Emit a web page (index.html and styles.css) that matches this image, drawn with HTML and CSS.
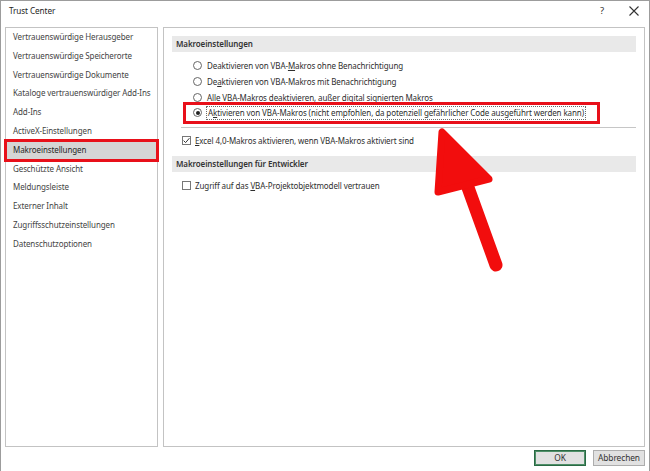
FILE: index.html
```html
<!DOCTYPE html>
<html lang="de">
<head>
<meta charset="utf-8">
<title>Trust Center</title>
<link rel="stylesheet" href="styles.css">
</head>
<body>
<div class="window">
  <div class="titlebar">
    <span class="title">Trust Center</span>
    <span class="tb-help">?</span>
    <span class="tb-close"><svg width="10" height="10" viewBox="0 0 10 10"><path d="M0.5 0.5L9.5 9.5M9.5 0.5L0.5 9.5" stroke="#333" stroke-width="1.1" fill="none"/></svg></span>
  </div>
  <div class="main">
    <ul class="nav">
      <li>Vertrauenswürdige Herausgeber</li>
      <li>Vertrauenswürdige Speicherorte</li>
      <li>Vertrauenswürdige Dokumente</li>
      <li>Kataloge vertrauenswürdiger Add-Ins</li>
      <li>Add-Ins</li>
      <li>ActiveX-Einstellungen</li>
      <li class="selected">Makroeinstellungen</li>
      <li>Geschützte Ansicht</li>
      <li>Meldungsleiste</li>
      <li>Externer Inhalt</li>
      <li>Zugriffsschutzeinstellungen</li>
      <li>Datenschutzoptionen</li>
    </ul>
    <div class="content">
      <div class="section-head">Makroeinstellungen</div>
      <div class="options">
        <div class="opt"><span class="radio"></span><span class="opt-label">Deaktivieren von VBA-<u>M</u>akros ohne Benachrichtigung</span></div>
        <div class="opt"><span class="radio"></span><span class="opt-label">De<u>a</u>ktivieren von VBA-Makros mit Benachrichtigung</span></div>
        <div class="opt"><span class="radio"></span><span class="opt-label">Alle VBA-Makros deaktivieren, außer digital signierten Makros</span></div>
        <div class="opt opt-marked"><span class="radio on"></span><span class="opt-label focus">A<u>k</u>tivieren von VBA-Makros (nicht empfohlen, da potenziell gefährlicher Code ausgeführt werden kann)</span></div>
      </div>
      <div class="sep"></div>
      <div class="check-row"><span class="checkbox"><svg width="7" height="7" viewBox="0 0 7 7"><path d="M0.6 3.6L2.6 5.6L6.4 1.2" stroke="#333" stroke-width="1" fill="none"/></svg></span><span><u>E</u>xcel 4,0-Makros aktivieren, wenn VBA-Makros aktiviert sind</span></div>
      <div class="section-head second">Makroeinstellungen für Entwickler</div>
      <div class="check-row second"><span class="checkbox"></span><span>Zugriff auf das <u>V</u>BA-Projektobjektmodell vertrauen</span></div>
    </div>
  </div>
  <div class="footer">
    <button class="btn btn-default">OK</button>
    <button class="btn">Abbrechen</button>
  </div>
  <svg class="arrow" width="650" height="471" viewBox="0 0 650 471">
    <line x1="466" y1="182" x2="496" y2="265" stroke="#f20d0d" stroke-width="13" stroke-linecap="round"/>
    <polygon points="442,132 438,192 489,179" fill="#f20d0d" stroke="#f20d0d" stroke-width="7" stroke-linejoin="round"/>
  </svg>
</div>
</body>
</html>
```
FILE: styles.css
```css
* { box-sizing: border-box; }
html, body { margin: 0; padding: 0; }
body {
  width: 650px;
  height: 471px;
  overflow: hidden;
  background: #ffffff;
  font-family: "Noto Sans", "Open Sans", sans-serif;
  font-size: 8px;
  letter-spacing: -0.1px;
  color: #2e2e2e;
}
.window {
  position: relative;
  width: 650px;
  height: 471px;
  background: #ffffff;
  box-shadow: inset 1px 1px 0 #9c9c9c, inset -1px 0 0 #9c9c9c;
  display: flex;
  flex-direction: column;
}
.titlebar {
  height: 27px;
  display: flex;
  align-items: flex-start;
  padding: 4px 0 0 9px;
  line-height: 14px;
}
.title { font-size: 8.2px; color: #1e1e1e; flex: 1; }
.tb-help { width: 10px; text-align: center; margin-right: 22px; font-size: 9.5px; color: #333; }
.tb-close { width: 10px; margin-right: 11px; padding-top: 2px; line-height: 0; }
.main {
  height: 420px;
  display: flex;
  gap: 5px;
  padding: 0 5px;
}
.nav {
  list-style: none;
  margin: 0;
  padding: 0;
  width: 153px;
  border: 1px solid #c3c3c3;
  color: #444;
}
.nav li {
  height: 18.8px;
  line-height: 18.8px;
  padding-left: 7px;
  white-space: nowrap;
}
.nav li.selected {
  background: #d5d5d5;
  color: #262626;
  outline: 3px solid #e8101a;
  outline-offset: -1px;
}
.content {
  flex: 1;
  border: 1px solid #c3c3c3;
  padding: 8px 8px 0 8px;
}
.section-head {
  height: 16px;
  line-height: 16px;
  background: #e9e9e9;
  padding-left: 4px;
  font-weight: 600;
  color: #333;
}
.options { margin-top: 6px; }
.opt {
  height: 15.7px;
  display: flex;
  align-items: center;
  margin-left: 14px;
  padding-left: 7px;
  white-space: nowrap;
}
.opt-marked {
  width: 411px;
  outline: 3px solid #e8101a;
}
.radio {
  width: 9px;
  height: 9px;
  border: 1px solid #666;
  border-radius: 50%;
  margin-right: 5px;
  flex: none;
  display: flex;
  align-items: center;
  justify-content: center;
}
.radio.on::after {
  content: "";
  width: 4px;
  height: 4px;
  border-radius: 50%;
  background: #222;
}
.opt-label.focus {
  border: 1px dotted #6a6a6a;
  padding: 0 1px;
  margin-left: -1px;
  line-height: 12px;
}
.sep {
  height: 1px;
  background: #c6c6c6;
  margin: 6px 0 0 9px;
}
.check-row {
  height: 16px;
  display: flex;
  align-items: center;
  margin-top: 5px;
  padding-left: 10px;
  white-space: nowrap;
}
.check-row.second { margin-top: 6px; }
.checkbox {
  width: 9px;
  height: 9px;
  border: 1px solid #777;
  margin-right: 4px;
  flex: none;
  display: flex;
  align-items: center;
  justify-content: center;
}
.section-head.second { margin-top: 7px; }
.footer {
  display: flex;
  justify-content: flex-end;
  gap: 7px;
  padding: 3px 5px 0 0;
}
.btn {
  width: 52px;
  height: 16px;
  padding: 0;
  font-family: inherit;
  font-size: 8.4px;
  letter-spacing: -0.1px;
  color: #333;
  background: #e1e1e1;
  border: 1px solid #adadad;
  line-height: 14px;
}
.btn-default {
  border: 1px solid #2a6a44;
  box-shadow: inset 0 0 0 1px #4f8f68;
}
.arrow {
  position: absolute;
  left: 0;
  top: 0;
  pointer-events: none;
}
```
